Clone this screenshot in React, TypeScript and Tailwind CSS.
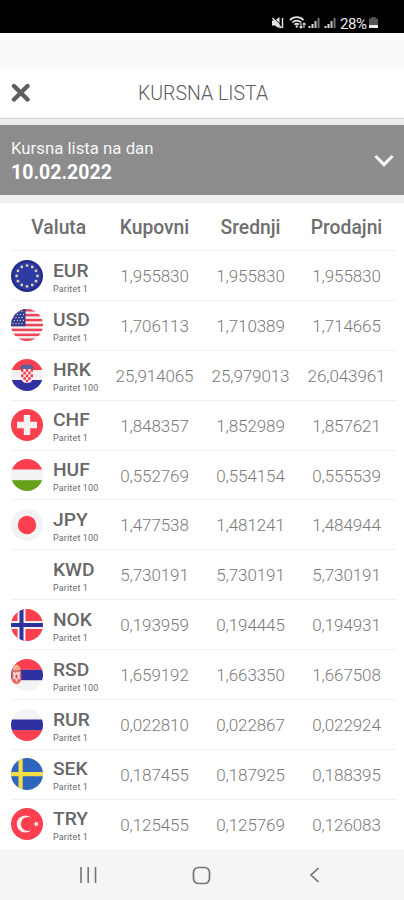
import type { ReactNode } from "react";

interface Rate {
  code: string;
  unit: number;
  buy: string;
  mid: string;
  sell: string;
}

const rates: Rate[] = [
  { code: "EUR", unit: 1, buy: "1,955830", mid: "1,955830", sell: "1,955830" },
  { code: "USD", unit: 1, buy: "1,706113", mid: "1,710389", sell: "1,714665" },
  { code: "HRK", unit: 100, buy: "25,914065", mid: "25,979013", sell: "26,043961" },
  { code: "CHF", unit: 1, buy: "1,848357", mid: "1,852989", sell: "1,857621" },
  { code: "HUF", unit: 100, buy: "0,552769", mid: "0,554154", sell: "0,555539" },
  { code: "JPY", unit: 100, buy: "1,477538", mid: "1,481241", sell: "1,484944" },
  { code: "KWD", unit: 1, buy: "5,730191", mid: "5,730191", sell: "5,730191" },
  { code: "NOK", unit: 1, buy: "0,193959", mid: "0,194445", sell: "0,194931" },
  { code: "RSD", unit: 100, buy: "1,659192", mid: "1,663350", sell: "1,667508" },
  { code: "RUR", unit: 1, buy: "0,022810", mid: "0,022867", sell: "0,022924" },
  { code: "SEK", unit: 1, buy: "0,187455", mid: "0,187925", sell: "0,188395" },
  { code: "TRY", unit: 1, buy: "0,125455", mid: "0,125769", sell: "0,126083" },
];

const columns = ["Valuta", "Kupovni", "Srednji", "Prodajni"];

const RED = "#fb3f4e";
const BLUE = "#2f31a0";
const PALE = "#f3f3f4";

// every flag is drawn on a 32x32 square and clipped to a circle
const flags: Record<string, ReactNode> = {
  EUR: (
    <>
      <rect width="32" height="32" fill="#242c8c" />
      <circle cx="16" cy="16" r="13.5" fill="#2f3aa2" />
      {Array.from({ length: 12 }, (_, i) => {
        const a = (i * Math.PI) / 6;
        return <circle key={i} cx={16 + 10.4 * Math.sin(a)} cy={16 - 10.4 * Math.cos(a)} r="1.4" fill="#ddd4ae" />;
      })}
    </>
  ),
  USD: (
    <>
      <rect width="32" height="32" fill={PALE} />
      {[0, 4.92, 9.84, 14.76, 19.68, 24.6, 29.5].map((y) => (
        <rect key={y} y={y} width="32" height="2.5" fill="#ee4358" />
      ))}
      <rect width="14.5" height="17.2" fill="#353d8e" />
      {[2, 5, 8, 11, 14].map((y, r) =>
        [2, 5, 8, 11].map((x) => <circle key={`${x}-${y}`} cx={x + (r % 2) * 1.4} cy={y + 0.5} r="0.65" fill="#c9cce6" />),
      )}
    </>
  ),
  HRK: (
    <>
      <rect width="32" height="32" fill={PALE} />
      <rect width="32" height="11" fill={RED} />
      <rect y="21" width="32" height="11" fill={BLUE} />
      <path d="M9.5 8 12 5.500l2 .7 2-1.200 2 1.200 2-.7L22.500 8l-.5 3H10z" fill="#56649f" />
      <path d="M10 10h12v8.500c0 3-2.500 5.700-6 5.700s-6-2.700-6-5.700z" fill="#f6e9eb" />
      {[0, 1, 2, 3, 4].map((r) =>
        [0, 1, 2, 3, 4].map((c) =>
          (r + c) % 2 === 0 && !(r === 4 && (c === 0 || c === 4)) ? (
            <rect key={`${r}-${c}`} x={10 + c * 2.4} y={10 + r * 2.7} width="2.4" height="2.7" fill="#ee3b4b" />
          ) : null,
        ),
      )}
    </>
  ),
  CHF: (
    <>
      <rect width="32" height="32" fill={RED} />
      <path d="M12.800 6h6.400v6.800H26v6.400h-6.800V26h-6.400v-6.800H6v-6.400h6.800z" fill="#f8f2f2" />
    </>
  ),
  HUF: (
    <>
      <rect width="32" height="32" fill={PALE} />
      <rect width="32" height="10.500" fill={RED} />
      <rect y="21.200" width="32" height="10.800" fill="#67a01b" />
    </>
  ),
  JPY: (
    <>
      <rect width="32" height="32" fill={PALE} />
      <circle cx="16" cy="16" r="9.200" fill={RED} />
    </>
  ),
  NOK: (
    <>
      <rect width="32" height="32" fill={RED} />
      <path d="M6.500 0h8v12H32v8H14.500v12h-8V20H0v-8h6.500z" fill={PALE} />
      <path d="M8.500 0h4v14H32v4H12.500v14h-4V18H0v-4h8.500z" fill={BLUE} />
    </>
  ),
  RSD: (
    <>
      <rect width="32" height="32" fill={PALE} />
      <rect width="32" height="10.800" fill={RED} />
      <rect y="10.800" width="32" height="10.400" fill={BLUE} />
      <path d="M.5 11.500h9.700v9c0 2.200-2 4-4.800 4.700-2.900-.7-4.900-2.500-4.900-4.700z" fill="#ea6a62" />
      <path d="M2 12.500 4.500 14l1-1.500 1 1.500L9 12.500 8.300 17l.9 3-2.200-.5-1.500 4-1.500-4-2.200.5.900-3z" fill="#f6e6e2" />
      <path d="M4.500 15.500h2v4h-2z" fill="#e4454f" />
      <path d="M2 11.500 1.700 8.500l1.600-1.700 2.200-1.300 2.200 1.300 1.600 1.700-.3 3z" fill="#eeb08a" />
    </>
  ),
  RUR: (
    <>
      <rect width="32" height="32" fill={PALE} />
      <rect y="10.500" width="32" height="11" fill={BLUE} />
      <rect y="21.200" width="32" height="10.800" fill={RED} />
    </>
  ),
  SEK: (
    <>
      <rect width="32" height="32" fill="#2f65bd" />
      <path d="M7.500 0h4.200v14H32v4.200H11.700V32H7.500V18.200H0V14h7.500z" fill="#f5dc45" />
    </>
  ),
  TRY: (
    <>
      <rect width="32" height="32" fill={RED} />
      <circle cx="14.300" cy="16" r="8.600" fill="#f8f2f2" />
      <circle cx="16.800" cy="16" r="6.900" fill={RED} />
      <path d="m22 16 2.100-.8.1-2.200 1.400 1.700 2.100-.6-1.200 1.900 1.200 1.900-2.100-.6-1.400 1.700-.1-2.200z" fill="#f8f2f2" />
    </>
  ),
};

function Flag({ code }: { code: string }) {
  return (
    <span className="block size-8 shrink-0 rounded-full overflow-hidden">
      {flags[code] && (
        <svg viewBox="0 0 32 32" className="size-8">
          {flags[code]}
        </svg>
      )}
    </span>
  );
}

function Signal() {
  return (
    <svg width="13" height="12" viewBox="0 0 13 12">
      <path d="M.5 9h2v2h-2zM3.500 7h2v4h-2z" fill="#ddd" />
      <path d="M6.500 4h2v7h-2z" fill="#c4c4c4" />
      <path d="M9.500 1h2v10h-2z" fill="#777" />
    </svg>
  );
}

function StatusBar() {
  return (
    <div className="h-[33px] bg-black flex items-start justify-end pr-[26px] pt-[17px]">
      <svg width="12" height="12" viewBox="0 0 12 12" className="mr-[5px]">
        <path d="M0 3.500h3L7.500 0v11.500L3 8.500H0z" fill="#e5e5e5" />
        <path d="m1.500 0 8 9" stroke="#000" strokeWidth=".8" />
        <path d="m.5 1 9 10M10.500 1v10" stroke="#ddd" strokeWidth="1.500" />
      </svg>
      <svg width="18" height="13" viewBox="0 0 18 13" fill="none" stroke="#e0e0e0" strokeWidth="1.800" className="mr-[1px] -mt-px">
        <path d="M1 4.200C4.500.2 11 .2 14.500 4.200M3.300 6.500c2.500-2.600 6.400-2.600 8.900 0M5.500 8.700c1.300-1.300 3.200-1.300 4.500 0" />
        <path d="m7.800 9 1.400 1.500-1.400 1.500-1.400-1.500z" fill="#e0e0e0" stroke="none" />
        <path d="M12 7v5M10.500 10.500l1.500 1.500 1.500-1.500M15 12V7M13.800 8.500 15 7l1.700 1.700" strokeWidth="1.100" />
      </svg>
      <Signal />
      <span className="w-[3px]" />
      <Signal />
      <span className="ml-[3px] w-[28px] text-[15px] leading-[14px] tracking-[-0.400px] text-[#eaeaea]">28%</span>
      <svg width="9" height="12" viewBox="0 0 9 12" className="ml-px">
        <path d="M2.500 0h4v1.500H9V8H0V1.500h2.500z" fill="#555" />
        <path d="M0 8h9v3H0z" fill="#f0f0f0" />
      </svg>
    </div>
  );
}

function RateRow({ rate }: { rate: Rate }) {
  return (
    <div className="h-[49.900px] pl-[11px] pr-2">
      <div className="h-full grid grid-cols-[95.500px_96px_96px_96px] border-t border-[#f1f1f1] text-center">
        <div className="flex items-start text-left pt-[8.500px]">
          <Flag code={rate.code} />
          <div className="ml-[10px] whitespace-nowrap">
            <p className="text-[19.200px] leading-[22px] font-medium text-[#686868]">{rate.code}</p>
            <p className="mt-[2px] text-[9px] leading-[11px] tracking-[0.150px] text-[#6c6c6c]">Paritet {rate.unit}</p>
          </div>
        </div>
        {[rate.buy, rate.mid, rate.sell].map((value, i) => (
          <p key={i} className="pt-[14px] text-[17px] leading-[22px] tracking-[-0.100px] text-[#7a7a7a] font-light">
            {value}
          </p>
        ))}
      </div>
    </div>
  );
}

export default function App() {
  return (
    <div className="w-[404px] h-[900px] overflow-hidden flex flex-col bg-white font-['Roboto',sans-serif]">
      <StatusBar />
      <div className="h-9 bg-[#fafafa]" />

      <header className="h-[49px] flex items-center justify-center relative">
        <button className="absolute left-[10.500px] top-[13.500px]" aria-label="Zatvori">
          <svg width="20" height="20" viewBox="0 0 20 20" stroke="#5e5e5e" strokeWidth="4.400" strokeLinecap="round">
            <path d="m3 3 13.500 13.500M16.500 3 3 16.500" />
          </svg>
        </button>
        <h1 className="text-[19.500px] leading-6 font-light text-[#5c5c5c] ml-[2px]">KURSNA LISTA</h1>
      </header>
      <div className="h-[7px] bg-[#ededed] border-t border-[#cfcfcf]" />

      <button className="h-[70px] shrink-0 bg-[#8c8c8c] flex items-center justify-between pl-[11px] pr-[10px] text-left text-[#f5f5f5]">
        <span className="block pt-[2px]">
          <span className="block text-[16.800px] leading-[22px]">Kursna lista na dan</span>
          <span className="block pt-px text-[19.500px] leading-[25px] font-bold text-white">10.02.2022</span>
        </span>
        <svg width="20" height="14" viewBox="0 0 20 14" fill="none" stroke="#f5f5f5" strokeWidth="3.200" className="mt-[2px]">
          <path d="m1.500 2 8.500 8.600L18.500 2" />
        </svg>
      </button>
      <div className="h-2 shrink-0 bg-[#efefef]" />

      <div className="h-[47px] shrink-0 pl-[11px] pt-[13px] grid grid-cols-[95.500px_96px_96px_96px] text-center text-[19.300px] leading-6 font-medium text-[#6e6e6e]">
        {columns.map((name) => (
          <span key={name}>{name}</span>
        ))}
      </div>
      <div className="shrink-0">
        {rates.map((rate) => (
          <RateRow key={rate.code} rate={rate} />
        ))}
      </div>

      <nav className="flex-1 bg-[#f5f5f5] flex items-start pt-[17px] pl-[79px]">
        <svg width="18" height="18" viewBox="0 0 18 18" stroke="#757575" strokeWidth="1.600">
          <path d="M2 1v16M9.200 1v16M16.500 1v16" />
        </svg>
        <svg width="20" height="20" viewBox="0 0 20 20" fill="none" stroke="#757575" strokeWidth="1.700" className="ml-[94px]">
          <rect x="2.500" y="1.500" width="16" height="16" rx="5" />
        </svg>
        <svg width="12" height="18" viewBox="0 0 12 18" fill="none" stroke="#757575" strokeWidth="1.700" className="ml-[97px]">
          <path d="M10.500 2 3 9l7.500 7" />
        </svg>
      </nav>
    </div>
  );
}
